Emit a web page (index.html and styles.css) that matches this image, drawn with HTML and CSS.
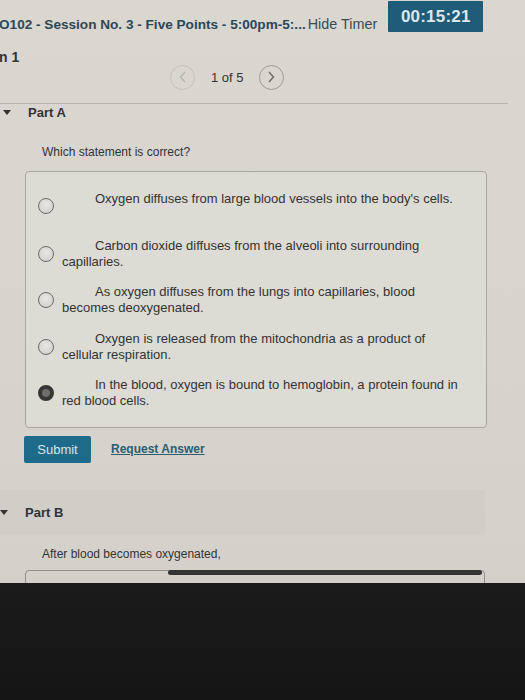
FILE: index.html
```html
<!DOCTYPE html>
<html>
<head>
<meta charset="utf-8">
<link rel="stylesheet" href="styles.css">
</head>
<body>
<div class="page">
  <div class="screen">
    <div class="topbar">
      <div class="title">O102 - Session No. 3 - Five Points - 5:00pm-5:...</div>
      <div class="hide">Hide Timer</div>
      <div class="timer">00:15:21</div>
    </div>
    <div class="qname">n 1</div>
    <div class="pager">
      <span class="circ dim">
        <svg width="10" height="12" viewBox="0 0 10 12"><path d="M7 1 L2.5 6 L7 11" fill="none" stroke="#b4b4b0" stroke-width="1.3"/></svg>
      </span>
      <span class="pg">1 of 5</span>
      <span class="circ">
        <svg width="10" height="12" viewBox="0 0 10 12"><path d="M3 1 L7.5 6 L3 11" fill="none" stroke="#6a6a68" stroke-width="1.4"/></svg>
      </span>
    </div>
    <div class="rule"></div>
    <div class="part"><span class="tri"></span><span class="pname">Part A</span></div>
    <div class="prompt">Which statement is correct?</div>
    <div class="box">
      <div class="opt"><span class="radio"></span><p class="otext">Oxygen diffuses from large blood vessels into the body's cells.</p></div>
      <div class="opt"><span class="radio"></span><p class="otext">Carbon dioxide diffuses from the alveoli into surrounding capillaries.</p></div>
      <div class="opt"><span class="radio"></span><p class="otext">As oxygen diffuses from the lungs into capillaries, blood becomes deoxygenated.</p></div>
      <div class="opt"><span class="radio"></span><p class="otext">Oxygen is released from the mitochondria as a product of cellular respiration.</p></div>
      <div class="opt"><span class="radio on"></span><p class="otext">In the blood, oxygen is bound to hemoglobin, a protein found in red blood cells.</p></div>
    </div>
    <div class="actions">
      <span class="submit">Submit</span>
      <span class="req">Request Answer</span>
    </div>
    <div class="part partb"><span class="tri"></span><span class="pname">Part B</span></div>
    <div class="prompt promptb">After blood becomes oxygenated,</div>
    <div class="box2"><div class="bar"></div></div>
  </div>
  <div class="bezel"></div>
</div>
</body>
</html>
```
FILE: styles.css
```css
html, body { margin: 0; padding: 0; }
body { background: #161616; }
.page {
  width: 525px;
  height: 700px;
  overflow: hidden;
  font-family: "Liberation Sans", Arial, sans-serif;
  color: #333;
  display: flex;
  flex-direction: column;
}
.screen {
  height: 583px;
  background: linear-gradient(180deg, #d9d7d0 0%, #d6d4cd 60%, #d3d1ca 100%);
  position: relative;
  overflow: hidden;
}
.bezel {
  flex: 1;
  background: linear-gradient(180deg, #1b1b1b 0%, #151515 100%);
}
.topbar {
  display: flex;
  align-items: flex-start;
  height: 34px;
}
.title {
  font-size: 13.6px;
  font-weight: bold;
  color: #2e4656;
  margin-top: 17px;
  line-height: 15px;
  margin-left: -1px;
  white-space: nowrap;
}
.hide {
  font-size: 14.4px;
  color: #3a4b56;
  margin-top: 17px;
  line-height: 15px;
  margin-left: 2px;
}
.timer {
  margin-left: 11px;
  margin-top: 1px;
  width: 95px;
  height: 31px;
  background: #1e5c7a;
  color: #dfe6ea;
  font-size: 17px;
  font-weight: bold;
  display: flex;
  align-items: center;
  justify-content: center;
  letter-spacing: 0.2px;
  border-radius: 1px;
}
.qname {
  margin-top: 15px;
  font-size: 14px;
  font-weight: bold;
  line-height: 16px;
  color: #333;
  margin-left: -1px;
}
.pager {
  display: flex;
  align-items: center;
  margin-top: -1px;
  padding-left: 170px;
  height: 26px;
}
.circ {
  width: 23px;
  height: 23px;
  border: 1px solid #9c9c98;
  border-radius: 50%;
  display: flex;
  align-items: center;
  justify-content: center;
}
.circ.dim { border-color: #c2c1bc; }
.pg {
  font-size: 13px;
  color: #333;
  margin: 0 15px 0 16px;
  padding-top: 1px;
}
.rule {
  margin-top: 13px;
  width: 508px;
  height: 1px;
  background: #b6b4ae;
}
.part {
  display: flex;
  align-items: center;
  height: 17px;
  margin-top: 0;
}
.tri {
  width: 0;
  height: 0;
  border-left: 4.5px solid transparent;
  border-right: 4.5px solid transparent;
  border-top: 5px solid #333;
  margin-left: 3px;
}
.pname {
  font-size: 13px;
  font-weight: bold;
  color: #333;
  margin-left: 17px;
}
.prompt {
  margin-top: 23px;
  margin-left: 42px;
  font-size: 12px;
  line-height: 16px;
  color: #333;
}
.box {
  margin: 11px 0 0 25px;
  width: 460px;
  border: 1px solid #a7a6a1;
  border-radius: 4px;
  background: #dcdbd4;
  padding: 19px 0 18px 0;
}
.opt {
  display: flex;
  align-items: center;
  min-height: 32px;
  margin-bottom: 14.5px;
}
.opt:last-child { margin-bottom: 0; }
.opt:first-child { align-items: flex-start; }
.opt:first-child .radio { margin-top: 7px; }
.radio {
  flex: none;
  width: 14px;
  height: 14px;
  border: 1.5px solid #6a6a68;
  border-radius: 50%;
  background: radial-gradient(circle at 50% 40%, #e6e6e2 0%, #cdcdc9 100%);
  margin-left: 12px;
}
.radio.on {
  width: 8px;
  height: 8px;
  border: 4.5px solid #363636;
  background: #6e6e6c;
}
.otext {
  margin: 0 0 0 8px;
  font-size: 13px;
  line-height: 16px;
  text-indent: 33px;
  color: #333;
  width: 400px;
}
.actions {
  display: flex;
  align-items: center;
  margin-top: 8px;
  margin-left: 24px;
}
.submit {
  width: 67px;
  height: 27px;
  background: #1e6a8a;
  color: #d9e4ea;
  font-size: 13px;
  display: flex;
  align-items: center;
  justify-content: center;
  border-radius: 2px;
}
.req {
  margin-left: 20px;
  font-size: 12px;
  font-weight: bold;
  color: #2b5e72;
  text-decoration: underline;
  margin-top: -2px;
}
.partb {
  margin-top: 27px;
  height: 45px;
  width: 485px;
  background: #d0cec7;
}
.partb .tri { margin-left: 0; }
.partb .pname { margin-left: 17px; }
.promptb {
  margin-top: 11px;
}
.box2 {
  margin: 8px 0 0 25px;
  width: 458px;
  height: 30px;
  border: 1px solid #8f8e8a;
  border-radius: 4px;
  position: relative;
}
.bar {
  position: absolute;
  left: 142px;
  top: -1px;
  width: 314px;
  height: 5px;
  border-radius: 3px;
  background: #353535;
}
```
